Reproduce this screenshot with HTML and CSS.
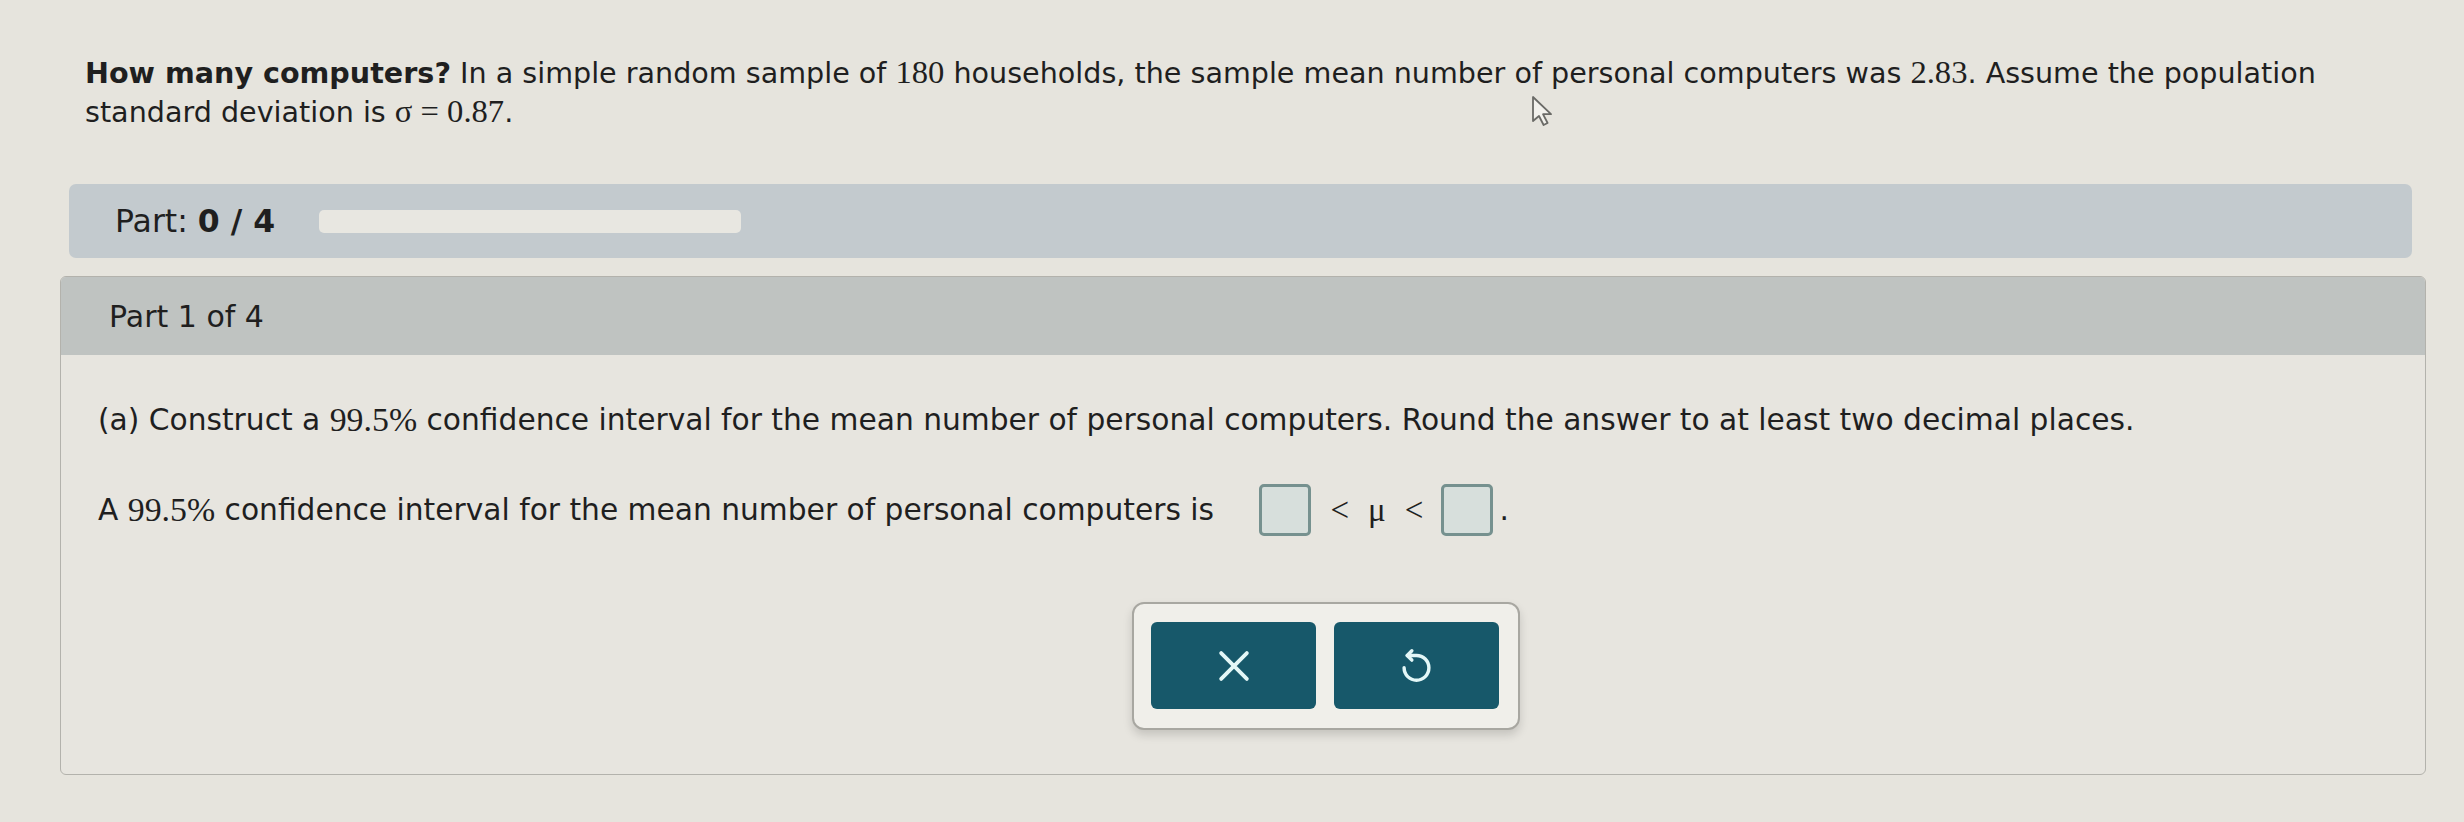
FILE: index.html
```html
<!DOCTYPE html>
<html lang="en">
<head>
<meta charset="utf-8">
<title>Confidence interval</title>
<link rel="stylesheet" href="styles.css">
</head>
<body>
<div class="page">
  <p class="question"><b>How many computers?</b> In a simple random sample of <span class="m">180</span> households, the sample mean number of personal computers was <span class="m">2.83</span>. Assume the population<br>standard deviation is <span class="m">σ = 0.87</span>.</p>

  <div class="partbar">
    <span class="partlabel">Part: <b>0 / 4</b></span>
    <div class="track"></div>
  </div>

  <section class="panel">
    <div class="panel-head">Part 1 of 4</div>
    <div class="panel-body">
      <p class="line">(a) Construct a <span class="m">99.5%</span> confidence interval for the mean number of personal computers. Round the answer to at least two decimal places.</p>
      <p class="line answer">A <span class="m">99.5%</span> confidence interval for the mean number of personal computers is <span class="box"></span><span class="rel">&lt;</span><span class="rel mu">μ</span><span class="rel">&lt;</span><span class="box"></span><span class="dot">.</span></p>
      <div class="actions">
        <div class="btns">
          <button class="btn" aria-label="Clear">
            <svg width="44" height="44" viewBox="0 0 24 24" fill="none" stroke="#e4f7f7" stroke-width="2.1" stroke-linecap="round"><path d="M5 5L19 19M19 5L5 19"/></svg>
          </button>
          <button class="btn" aria-label="Undo">
            <svg width="31" height="37" viewBox="3 1 20 23" fill="none" stroke="#e4f7f7" stroke-width="2.2" stroke-linecap="round" stroke-linejoin="round"><path d="M10 3L7 6L10 9"/><path d="M7 6H13A8 8 0 1 1 5 14"/></svg>
          </button>
        </div>
      </div>
    </div>
  </section>

  <svg class="cursor" width="26" height="32" viewBox="0 0 13 16"><path d="M1 1V13L4 10.5L6.3 15L8.3 14L6 9.6H10Z" fill="#f2f1ec" stroke="#6a6a66" stroke-width="0.9" stroke-linejoin="round"/></svg>
</div>
</body>
</html>
```

FILE: styles.css
```css
html, body {
  margin: 0;
  padding: 0;
}
body {
  background: #e6e4dd;
  font-family: "DejaVu Sans", Verdana, sans-serif;
  color: #1f1f1f;
  width: 2464px;
  height: 822px;
  overflow: hidden;
}
.page {
  position: relative;
  padding-top: 53px;
}
.question {
  margin: 0 60px 0 85px;
  font-size: 28.6px;
  line-height: 38px;
  white-space: nowrap;
}
.m {
  font-family: "Liberation Serif", "Times New Roman", serif;
  font-size: 1.14em;
}
.partbar {
  margin: 53px 52px 0 69px;
  height: 74px;
  background: #c3cace;
  border-radius: 7px;
  display: flex;
  align-items: center;
  padding-left: 46px;
  gap: 44px;
}
.partlabel {
  font-size: 31.5px;
}
.track {
  width: 422px;
  height: 23px;
  background: #e8e7e1;
  border-radius: 5px;
}
.panel {
  margin: 18px 38px 0 60px;
  border: 1.5px solid #b3b2ac;
  border-radius: 6px;
  overflow: hidden;
  background: #e7e5df;
}
.panel-head {
  height: 78px;
  background: #bfc3c1;
  display: flex;
  align-items: center;
  padding-left: 48px;
  font-size: 30px;
}
.panel-body {
  padding: 45px 0 44px 37px;
}
.line {
  margin: 0;
  font-size: 29.7px;
  line-height: 40px;
  display: flex;
  align-items: center;
  white-space: pre-wrap;
}
.answer {
  margin-top: 44px;
}
.box {
  display: inline-block;
  width: 46px;
  height: 46px;
  border: 3px solid #76918f;
  background: #d7dfdc;
  border-radius: 5px;
  margin-left: 36px;
}
.rel {
  font-family: "Liberation Serif", "Times New Roman", serif;
  font-size: 33px;
  margin-left: 19px;
}
.rel + .box {
  margin-left: 18px;
}
.dot {
  margin-left: 6px;
}
.actions {
  display: flex;
  padding-left: 1034px;
  margin-top: 66px;
}
.btns {
  display: flex;
  gap: 18px;
  padding: 18px 19px 19px 17px;
  background: #f0efea;
  border: 2px solid #a8a7a1;
  border-radius: 12px;
  box-shadow: 0 5px 10px rgba(0, 0, 0, 0.15);
}
.btn {
  width: 165px;
  height: 87px;
  border: none;
  border-radius: 6px;
  background: #17586a;
  display: flex;
  align-items: center;
  justify-content: center;
  padding: 0;
}
.cursor {
  position: absolute;
  left: 1531px;
  top: 95px;
}
```
